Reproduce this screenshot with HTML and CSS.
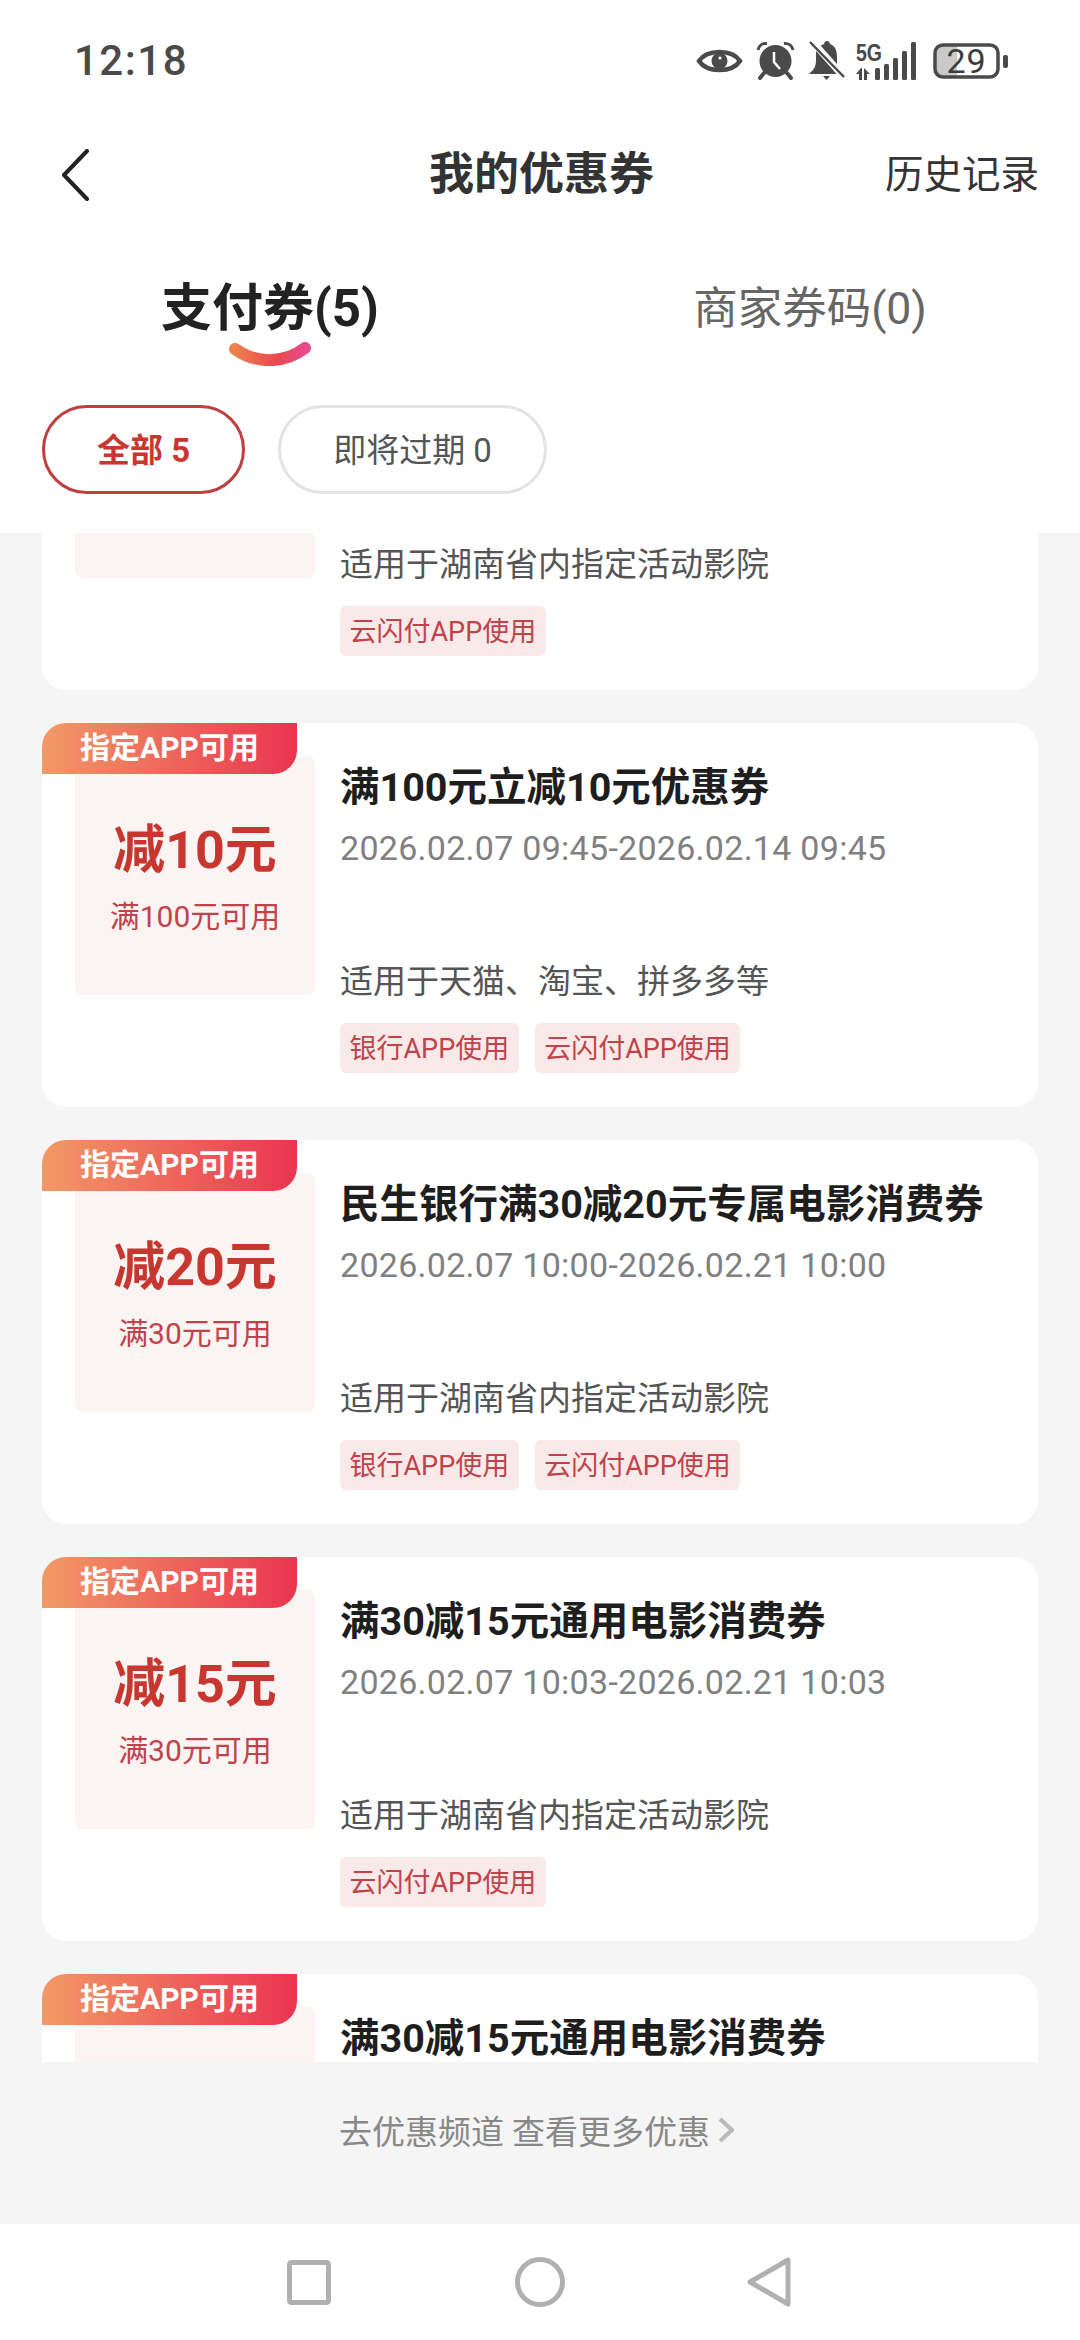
FILE: index.html
```html
<!doctype html>
<html>
    <head>
        <meta charset=utf-8>
        <title>我的优惠券</title>
        <link rel="stylesheet" href="styles.css">
    </head>
    <body>
        <div class="top">
            <div class="status-bar">
                <span class="time">12:18</span>
                <div class="status-icons">
                    <svg class="ic-eye" viewBox="0 0 45 24"><path d="M2 12C10 0 35 0 43 12C35 24 10 24 2 12Z" fill="none" stroke="#4a4a4a" stroke-width="4.500"/><circle cx="22.500" cy="12" r="8" fill="#4a4a4a"/><circle cx="23" cy="9" r="1.600" fill="#fff"/></svg>
                    <svg class="ic-alarm" viewBox="0 0 37 37"><circle cx="18.500" cy="19" r="16" fill="#4a4a4a"/><path d="M1 8C2 3 6 1 10 1.500M36 8C35 3 31 1 27 1.500" fill="none" stroke="#4a4a4a" stroke-width="3"/><path d="M7 31L3 36M30 31L34 36" stroke="#4a4a4a" stroke-width="4" stroke-linecap="round"/><path d="M17 10V20L23 27" fill="none" stroke="#fff" stroke-width="2.500"/></svg>
                    <svg class="ic-bell" viewBox="0 0 35 40"><path d="M18 0C20 0 21 2 21 3C27 5 28 11 28 17V25L34 33H0C4 29 7 27 7 19V13C7 8 10 5 15 3C15 2 16 0 18 0Z" fill="#4a4a4a"/><path d="M14 35H21L17.500 39Z" fill="#4a4a4a"/><path d="M2 -1L34 35" stroke="#fff" stroke-width="7"/><path d="M1 1L35 36" stroke="#4a4a4a" stroke-width="2.500"/></svg>
                    <svg class="ic-net" viewBox="0 0 62 38">
                        <text class="net-label" x="0" y="19" textLength="26" lengthAdjust="spacingAndGlyphs">5G</text>
                        <path d="M5 26L0 32H3V38H6V26ZM8 26V38H11V32H14Z" fill="#4a4a4a"/>
                        <rect x="19" y="26" width="5" height="12" rx="1.500" fill="#4a4a4a"/>
                        <rect x="28" y="22" width="5" height="16" rx="1.500" fill="#4a4a4a"/>
                        <rect x="37" y="16" width="5" height="22" rx="1.500" fill="#4a4a4a"/>
                        <rect x="46" y="9" width="5" height="29" rx="1.500" fill="#4a4a4a"/>
                        <rect x="55" y="0" width="5" height="38" rx="1.500" fill="#4a4a4a"/>
                    </svg>
                    <svg class="ic-batt" viewBox="0 0 76 36">
                        <path d="M10 2H24V34H10A8 8 0 0 1 2 26V10A8 8 0 0 1 10 2Z" fill="#c9c9c9"/>
                        <rect x="2" y="2" width="63" height="32" rx="8" fill="none" stroke="#4a4a4a" stroke-width="3.500"/>
                        <rect x="70" y="12" width="5" height="13" rx="2" fill="#4a4a4a"/>
                        <text class="batt-label" x="33.500" y="30">29</text>
                    </svg>
                </div>
            </div>
            <div class="nav-bar">
                <svg class="back" viewBox="0 0 28 52"><path d="M26 2L3 26L26 50" fill="none" stroke="#222" stroke-width="4" stroke-linecap="round" stroke-linejoin="round"/></svg>
                <h1>我的优惠券</h1>
                <a class="history">历史记录</a>
            </div>
            <div class="tabs">
                <div class="tab tab-on">
                    <span>支付券(5)</span>
                    <svg class="smile" viewBox="0 0 84 24">
                        <defs><linearGradient id="smileFill"><stop offset="0" stop-color="#ee7f4f"/><stop offset="0.6" stop-color="#e8494f"/><stop offset="1" stop-color="#e84a8c"/></linearGradient></defs>
                        <path d="M7 7C28 22 56 22 77 6" fill="none" stroke="url(#smileFill)" stroke-width="12" stroke-linecap="round"/>
                    </svg>
                </div>
                <div class="tab"><span>商家券码(0)</span></div>
            </div>
            <div class="chips">
                <span class="chip chip-on">全部 5</span>
                <span class="chip">即将过期 0</span>
            </div>
        </div>

        <div class="list">
            <div class="card card-cut">
                <div class="panel"></div>
                <div class="info">
                    <div class="scope">适用于湖南省内指定活动影院</div>
                    <div class="tags"><span class="tag">云闪付APP使用</span></div>
                </div>
            </div>

            <div class="card">
                <div class="ribbon">指定APP可用</div>
                <div class="panel">
                    <div class="amount">减10元</div>
                    <div class="limit">满100元可用</div>
                </div>
                <div class="info">
                    <div class="title">满100元立减10元优惠券</div>
                    <div class="date">2026.02.07 09:45-2026.02.14 09:45</div>
                    <div class="scope">适用于天猫、淘宝、拼多多等</div>
                    <div class="tags"><span class="tag">银行APP使用</span><span class="tag">云闪付APP使用</span></div>
                </div>
            </div>

            <div class="card">
                <div class="ribbon">指定APP可用</div>
                <div class="panel">
                    <div class="amount">减20元</div>
                    <div class="limit">满30元可用</div>
                </div>
                <div class="info">
                    <div class="title">民生银行满30减20元专属电影消费券</div>
                    <div class="date">2026.02.07 10:00-2026.02.21 10:00</div>
                    <div class="scope">适用于湖南省内指定活动影院</div>
                    <div class="tags"><span class="tag">银行APP使用</span><span class="tag">云闪付APP使用</span></div>
                </div>
            </div>

            <div class="card">
                <div class="ribbon">指定APP可用</div>
                <div class="panel">
                    <div class="amount">减15元</div>
                    <div class="limit">满30元可用</div>
                </div>
                <div class="info">
                    <div class="title">满30减15元通用电影消费券</div>
                    <div class="date">2026.02.07 10:03-2026.02.21 10:03</div>
                    <div class="scope">适用于湖南省内指定活动影院</div>
                    <div class="tags"><span class="tag">云闪付APP使用</span></div>
                </div>
            </div>

            <div class="card">
                <div class="ribbon">指定APP可用</div>
                <div class="panel"></div>
                <div class="info">
                    <div class="title">满30减15元通用电影消费券</div>
                </div>
            </div>
        </div>

        <div class="more">
            <span>去优惠频道 查看更多优惠</span>
            <svg class="more-arrow" viewBox="0 0 16 26"><path d="M2 2L14 13L2 24" fill="none" stroke="#bbb" stroke-width="4"/></svg>
        </div>

        <div class="sys-nav">
            <svg class="sys-square" viewBox="0 0 44 45"><rect x="2.500" y="2.500" width="39" height="40" rx="2" fill="none" stroke="#b0b0b0" stroke-width="5"/></svg>
            <svg class="sys-circle" viewBox="0 0 50 50"><circle cx="25" cy="25" r="22.500" fill="none" stroke="#b0b0b0" stroke-width="5"/></svg>
            <svg class="sys-back" viewBox="0 0 44 50"><path d="M41 3V47L3 25Z" fill="none" stroke="#b0b0b0" stroke-width="5" stroke-linejoin="round"/></svg>
        </div>
    </body>
</html>
```

FILE: styles.css
```css
* {
    box-sizing: border-box;
}

html, body {
    margin: 0;
    padding: 0;
}

body {
    width: 1080px;
    height: 2340px;
    display: flex;
    flex-direction: column;
    background: #f5f5f5;
    color: #222;
    font-family: Roboto, "Noto Sans CJK SC", sans-serif;
    overflow: hidden;
}

/* white header */
.top {
    height: 533px;
    flex: none;
    background: #fff;
}

.status-bar {
    height: 120px;
    display: flex;
    align-items: center;
    justify-content: space-between;
    padding: 0 71px 0 74px;
}

.time {
    font-size: 42px;
    font-weight: 500;
    letter-spacing: 1.5px;
    color: #4a4a4a;
}

.status-icons {
    display: flex;
    align-items: center;
    margin-top: 1px;
}

.status-icons svg {
    display: block;
    overflow: visible;
}

.ic-eye { width: 45px; height: 24px; margin-right: 15px; }
.ic-alarm { width: 37px; height: 37px; margin-right: 15px; }
.ic-bell { width: 35px; height: 40px; margin-right: 12px; }
.ic-net { width: 62px; height: 38px; margin-right: 15px; }
.ic-batt { width: 76px; height: 36px; }

.net-label {
    font-family: "Liberation Sans", sans-serif;
    font-size: 24px;
    font-weight: 700;
    fill: #4a4a4a;
}

.batt-label {
    font-family: Roboto, sans-serif;
    font-size: 34px;
    fill: #3c3c3c;
    text-anchor: middle;
    letter-spacing: 1px;
}

.nav-bar {
    height: 110px;
    display: grid;
    grid-template-columns: 1fr auto 1fr;
    align-items: center;
    padding: 0 41px 0 44px;
}

.back {
    width: 28px;
    height: 52px;
    margin-left: 17px;
    display: block;
}

.nav-bar h1 {
    margin: 0;
    font-size: 45px;
    font-weight: 700;
    color: #333;
    line-height: 60px;
}

.history {
    justify-self: end;
    font-size: 38.5px;
    line-height: 60px;
    color: #333;
}

.tabs {
    height: 175px;
    display: grid;
    grid-template-columns: 1fr 1fr;
    padding-top: 48px;
}

.tab {
    display: flex;
    flex-direction: column;
    align-items: center;
    font-size: 44.5px;
    line-height: 62px;
    color: #666;
}

.tab-on {
    font-size: 51px;
    font-weight: 700;
    line-height: 62px;
    color: #222;
}

.smile {
    width: 84px;
    height: 24px;
    margin-top: 2px;
    display: block;
}

.chips {
    display: flex;
    gap: 33px;
    padding-left: 42px;
}

.chip {
    height: 89px;
    padding: 0 52px;
    border: 3px solid #e3e3e3;
    border-radius: 45px;
    font-size: 33px;
    line-height: 85px;
    color: #555;
}

.chip-on {
    border-color: #bf3f3f;
    font-weight: 700;
    color: #c8372f;
}

/* coupon list, clipped at the top and bottom as if scrolled */
.list {
    height: 1529px;
    flex: none;
    display: flex;
    flex-direction: column;
    gap: 33px;
    padding: 0 42px;
    overflow: hidden;
}

.card {
    position: relative;
    flex: none;
    height: 384px;
    display: grid;
    grid-template-columns: 240px 1fr;
    gap: 25px;
    padding: 33px 0 34px 33px;
    background: #fff;
    border-radius: 24px;
}

.card-cut {
    height: 157px;
    padding-top: 0;
    border-radius: 0 0 24px 24px;
}

.ribbon {
    position: absolute;
    left: 0;
    top: 0;
    width: 255px;
    height: 51px;
    background: linear-gradient(90deg, #f19a66, #ea3450);
    border-radius: 24px 0 24px 0;
    color: #fff;
    font-size: 30px;
    font-weight: 700;
    line-height: 49px;
    text-align: center;
    white-space: nowrap;
}

.panel {
    height: 239px;
    padding-top: 65px;
    background: #fcf3f3;
    border-radius: 8px;
    text-align: center;
}

.card-cut .panel {
    height: 45px;
    padding-top: 0;
    border-radius: 0 0 8px 8px;
}

.amount {
    font-size: 52px;
    font-weight: 700;
    line-height: 60px;
    color: #c8372f;
}

.limit {
    margin-top: 16px;
    font-size: 30px;
    line-height: 40px;
    color: #c0434a;
}

.info {
    display: flex;
    flex-direction: column;
    min-width: 0;
}

.title {
    margin-top: 7px;
    font-size: 39.5px;
    font-weight: 700;
    line-height: 50px;
    color: #1e1e1e;
    white-space: nowrap;
}

.date {
    margin-top: 13px;
    font-size: 34px;
    letter-spacing: 0.28px;
    line-height: 44px;
    color: #808080;
    white-space: nowrap;
}

.scope {
    margin-top: auto;
    font-size: 33px;
    line-height: 44px;
    color: #555;
}

.tags {
    display: flex;
    gap: 16px;
    margin-top: 19px;
}

.tag {
    height: 50px;
    padding: 0 9.5px;
    background: #f9e9e9;
    border-radius: 6px;
    font-size: 27px;
    line-height: 52px;
    color: #c0434a;
}

.more {
    height: 162px;
    flex: none;
    display: flex;
    align-items: center;
    justify-content: center;
    gap: 8px;
    padding: 0 7px 26px 0;
    font-size: 33px;
    color: #888;
}

.more-arrow {
    width: 16px;
    height: 26px;
    display: block;
}

.sys-nav {
    height: 116px;
    flex: none;
    display: flex;
    align-items: center;
    background: #fff;
}

.sys-square { width: 44px; height: 45px; margin-left: 287px; }
.sys-circle { width: 50px; height: 50px; margin-left: 184px; }
.sys-back { width: 44px; height: 50px; margin-left: 182px; }
```
